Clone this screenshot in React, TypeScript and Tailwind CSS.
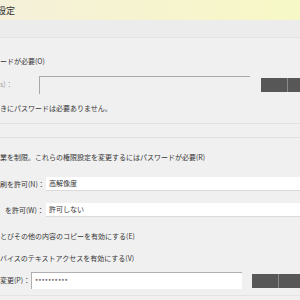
import React from 'react'

const font = { fontFamily: '"Noto Sans CJK JP", "Noto Sans", sans-serif' }

const Line = ({ children, className = '' }: { children: React.ReactNode; className?: string }) => (
  <div className={`flex h-[14px] items-center whitespace-nowrap text-[7px] leading-none text-[#363636] ${className}`}>
    {children}
  </div>
)

const DarkButton = ({ w, split }: { w: string; split: string }) => (
  <div className={`flex h-[14px] shrink-0 bg-[#575757] ${w}`}>
    <div className={`h-full border-r border-[#8a8a8a] ${split}`} />
  </div>
)

export default function App() {
  return (
    <div className="h-[300px] w-[300px] overflow-hidden bg-[#f0f0f0]" style={font}>
      <div className="flex h-[20px] items-center bg-gradient-to-r from-[#f5f0da] via-[#f6f4cf] to-[#f7f8c6]">
        <span className="ml-[-3px] text-[9px] leading-none text-[#333]">設定</span>
      </div>
      <div className="h-[18px] border-b border-[#e3e3e3] bg-[#ececec]" />

      <Line className="mt-[16px]">ードが必要(O)</Line>

      <div className="mt-[8px] flex h-[19px] items-start">
        <span className="mt-[5px] w-[39px] shrink-0 text-[7px] leading-none text-[#9a9a9a]">s)：</span>
        <div className="h-[18px] w-[211px] shrink-0 border-l border-t border-[#a8a8a8]" />
        <div className="ml-[11px] mt-[2px]">
          <DarkButton w="w-[39px]" split="w-[27px]" />
        </div>
      </div>

      <Line className="mt-[6px]">きにパスワードは必要ありません。</Line>

      <div className="mt-[8px] h-px bg-[#e2e2e2]" />
      <div className="mt-[13px] h-px bg-[#e2e2e2]" />

      <Line className="mt-[12px]">業を制限。これらの権限設定を変更するにはパスワードが必要(R)</Line>

      <div className="mt-[13px] flex h-[14px] items-center">
        <span className="w-[46px] shrink-0 text-[7px] leading-none text-[#363636]">刷を許可(N)：</span>
        <div className="flex h-[14px] flex-1 items-center border-b border-[#dadada] bg-white pl-[3px] text-[7px] leading-none text-[#333]">
          高解像度
        </div>
      </div>

      <div className="mt-[12px] flex h-[14px] items-center">
        <span className="w-[46px] shrink-0 pl-[5px] text-[7px] leading-none text-[#363636]">を許可(W)：</span>
        <div className="flex h-[14px] flex-1 items-center border-b border-[#dadada] bg-white pl-[3px] text-[7px] leading-none text-[#333]">
          許可しない
        </div>
      </div>

      <Line className="mt-[12px]">とびその他の内容のコピーを有効にする(E)</Line>
      <Line className="mt-[8px]">バイスのテキストアクセスを有効にする(V)</Line>

      <div className="mt-[7px] flex h-[17px] items-start">
        <span className="mt-[5px] w-[31px] shrink-0 text-[7px] leading-none text-[#363636]">変更(P)：</span>
        <div className="flex h-[17px] w-[211px] shrink-0 items-center border-l border-t border-[#b0b0b0] bg-white pl-[3px] text-[7px] leading-none text-[#444]">
          **********
        </div>
        <div className="ml-[10px] mt-[2px]">
          <DarkButton w="w-[48px]" split="w-[27px]" />
        </div>
      </div>

      <div className="mt-[6px] h-px bg-[#e4e4e4]" />
    </div>
  )
}
